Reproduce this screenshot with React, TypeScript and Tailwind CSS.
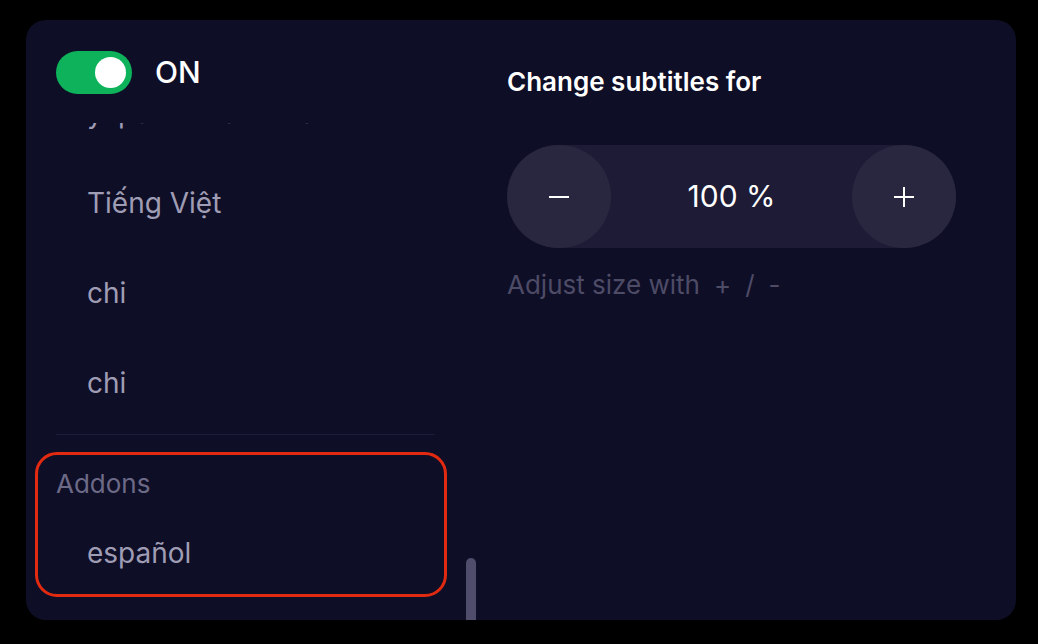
import React from 'react';

const languages = ['українська мова', 'Tiếng Việt', 'chi', 'chi'];

export default function App() {
  return (
    <div className="w-[1038px] h-[644px] bg-black pt-[20px] pl-[26px] font-['Inter',sans-serif]">
      <div className="w-[990px] h-[600px] rounded-[20px] bg-[#0f0e27] flex overflow-hidden">
        {/* Left column */}
        <div className="relative w-[454px] flex flex-col shrink-0">
          <div className="h-[103px] shrink-0 flex items-start pt-[31px] pl-[30px] gap-[23px]">
            <button className="w-[76px] h-[43px] rounded-full bg-[#0db25b] flex items-center justify-end pr-[6px]">
              <span className="w-[31px] h-[31px] rounded-full bg-white block" />
            </button>
            <span className="text-white text-[30px] font-medium leading-[43px]">ON</span>
          </div>

          <div className="flex-1 min-h-0 overflow-hidden">
            <div className="-mt-[55px] pr-[45px]">
              {languages.map((l, i) => (
                <div key={i} className="h-[90px] flex items-center pl-[61px] text-[28px] text-[#9f9db4]">
                  {l}
                </div>
              ))}
              <div className="ml-[30px] mt-[6px] border-t border-[#1e1c38]" />
              <div className="pl-[30px] pt-[33px] text-[26px] text-[#6c6a86] leading-[32px]">Addons</div>
              <div className="h-[90px] mt-[8px] flex items-center pl-[61px] text-[28px] text-[#9f9db4]">español</div>
            </div>
          </div>

          {/* scrollbar thumb */}
          <div className="absolute left-[440px] top-[538px] w-[10px] h-[80px] rounded-full bg-[#4f4d6b]" />

          {/* highlight */}
          <div className="absolute left-[9px] top-[432px] w-[412px] h-[145px] rounded-[22px] border-[3px] border-[#e12a10]" />
        </div>

        {/* Right column */}
        <div className="flex-1 pl-[27px] pt-[44px]">
          <h2 className="text-white text-[26px] font-semibold leading-[36px]">Change subtitles for</h2>
          <div className="mt-[45px] w-[449px] h-[103px] rounded-full bg-[#1d1b35] flex items-center justify-between">
            <button className="w-[104px] h-[103px] rounded-full bg-[#292740] flex items-center justify-center">
              <span className="block w-[20px] h-[2px] bg-white" />
            </button>
            <span className="text-white text-[30px] font-normal">100 %</span>
            <button className="relative w-[104px] h-[103px] rounded-full bg-[#292740] flex items-center justify-center">
              <span className="block w-[20px] h-[2px] bg-white" />
              <span className="absolute block w-[2px] h-[20px] bg-white" />
            </button>
          </div>
          <div className="mt-[17px] flex items-center text-[26px] text-[#4d4b66]">
            <span>Adjust size with</span>
            <span className="ml-[14px]">+</span>
            <span className="ml-[14px]">/</span>
            <span className="ml-[14px]">-</span>
          </div>
        </div>
      </div>
    </div>
  );
}
